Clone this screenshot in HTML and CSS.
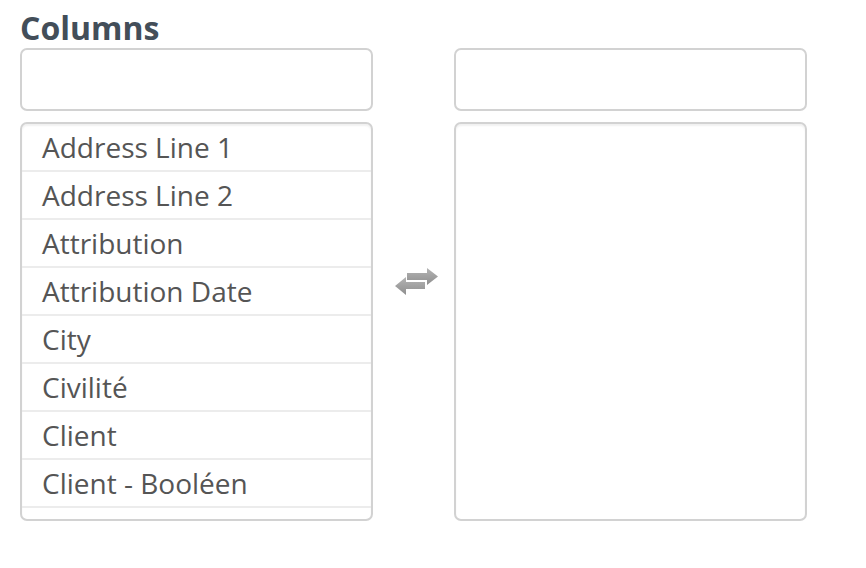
FILE: index.html
```html
<!DOCTYPE html>
<html>
<head>
<meta charset="utf-8">
<link rel="stylesheet" href="styles.css">
</head>
<body>
<div class="panel">
  <h4 class="title">Columns</h4>
  <div class="dual">
    <div class="side">
      <input class="filter" type="text">
      <ul class="list">
        <li>Address Line 1</li>
        <li>Address Line 2</li>
        <li>Attribution</li>
        <li>Attribution Date</li>
        <li>City</li>
        <li>Civilité</li>
        <li>Client</li>
        <li>Client - Booléen</li>
      </ul>
    </div>
    <div class="middle">
      <svg class="swap" width="46" height="28" viewBox="0 0 46 28">
        <defs>
          <linearGradient id="g" x1="0" y1="0" x2="0" y2="1">
            <stop offset="0" stop-color="#b4b4b4"/>
            <stop offset="1" stop-color="#8e8e8e"/>
          </linearGradient>
        </defs>
        <path d="M11 15 H31 V22 H11 Z M1 19 L12 10 L12 28 Z" fill="url(#g)"/>
        <path d="M13 6 H34 V13 H13 Z M33 1 L44 9.5 L33 18 Z" fill="url(#g)"/>
      </svg>
    </div>
    <div class="side">
      <input class="filter" type="text">
      <ul class="list"></ul>
    </div>
  </div>
</div>
</body>
</html>
```
FILE: styles.css
```css
html, body {
  margin: 0;
  padding: 0;
  background: #ffffff;
}
.panel {
  padding: 10px 20px 0 20px;
  font-family: "Open Sans", "DejaVu Sans", sans-serif;
}
.title {
  margin: 0 0 2px 0;
  font-size: 32px;
  line-height: 36px;
  font-weight: 700;
  color: #434e59;
}
.dual {
  display: grid;
  grid-template-columns: 353px 81px 353px;
}
.side {
  display: flex;
  flex-direction: column;
  gap: 11px;
}
.filter {
  box-sizing: border-box;
  width: 353px;
  height: 63px;
  margin: 0;
  border: 2px solid #d2d2d2;
  border-radius: 7px;
  background: #fff;
  outline: none;
}
.list {
  box-sizing: border-box;
  height: 399px;
  margin: 0;
  padding: 0;
  list-style: none;
  border: 2px solid #d2d2d2;
  border-radius: 7px;
  box-shadow: inset 0 2px 2px rgba(0,0,0,0.06);
  overflow: hidden;
}
.list li {
  height: 46px;
  line-height: 46px;
  padding-left: 20px;
  border-bottom: 2px solid #ececec;
  font-size: 28px;
  color: #555555;
  white-space: nowrap;
}
.middle {
  display: flex;
  justify-content: center;
  padding-top: 219px;
  padding-left: 6px;
}
.swap {
  display: block;
}
```
